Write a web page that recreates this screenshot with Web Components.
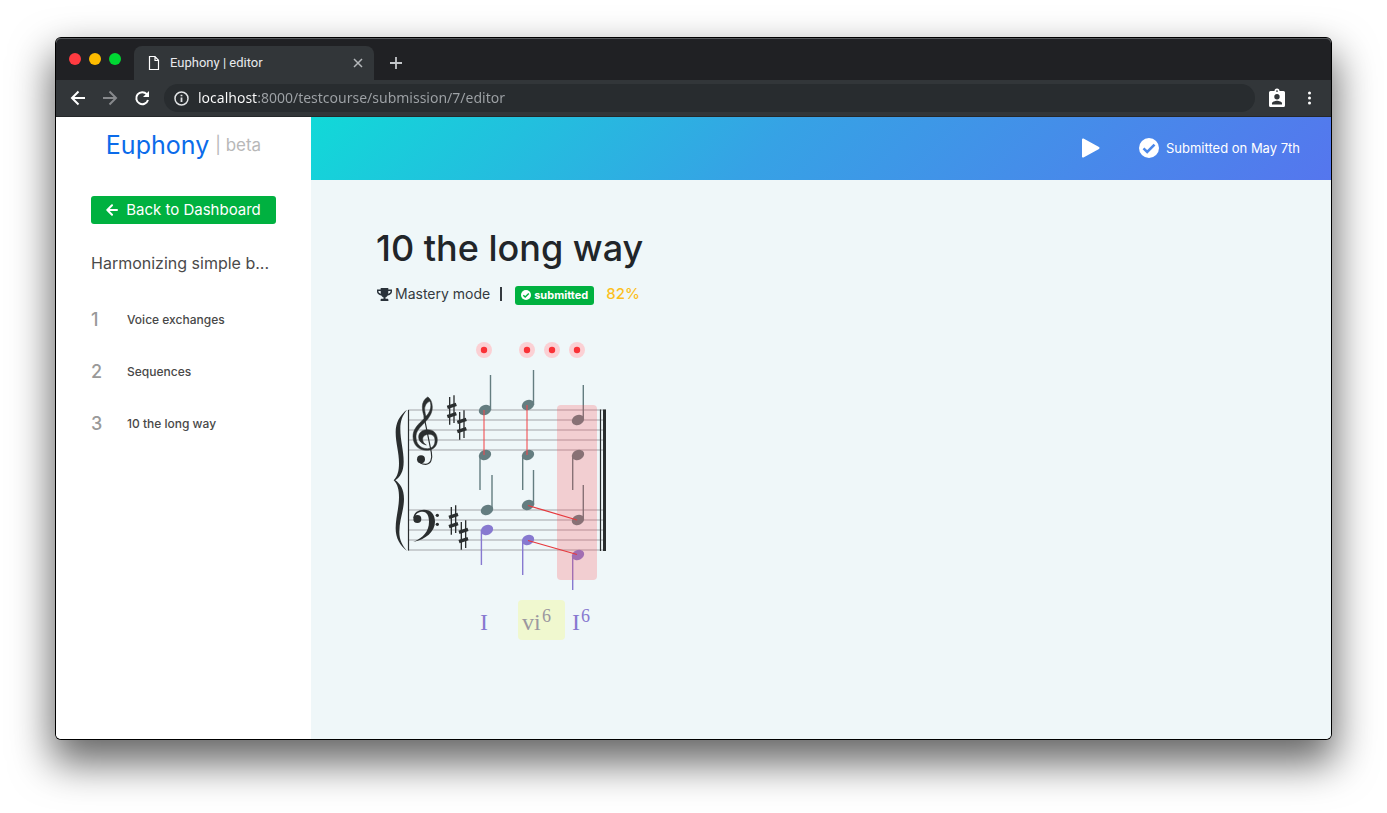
<!DOCTYPE html>
<html lang="en">
<head>
<meta charset="utf-8">
<title>Euphony | editor</title>
<style>
  body { margin: 0; background: #fff; font-family: Inter, "Open Sans", sans-serif; }
</style>
</head>
<body>
<browser-window>
  <tab-strip slot="chrome" label="Euphony | editor"></tab-strip>
  <nav-toolbar slot="chrome" url="localhost:8000/testcourse/submission/7/editor"></nav-toolbar>
  <course-sidebar>
    <span slot="heading">Harmonizing simple b...</span>
    <exercise-link number="1">Voice exchanges</exercise-link>
    <exercise-link number="2">Sequences</exercise-link>
    <exercise-link number="3">10 the long way</exercise-link>
  </course-sidebar>
  <editor-pane>
    <editor-header slot="header">Submitted on May 7th</editor-header>
    <exercise-heading score="82%">10 the long way</exercise-heading>
    <music-score></music-score>
  </editor-pane>
</browser-window>

<script>
class Base extends HTMLElement {
  constructor() {
    super();
    this.attachShadow({ mode: "open" });
  }
  connectedCallback() {
    this.shadowRoot.innerHTML = "<style>*{box-sizing:border-box}svg{display:block;flex:none}button,input{font:inherit;border:0;padding:0;margin:0;background:none;color:inherit}</style>" + this.view();
  }
}

customElements.define("browser-window", class extends Base {
  view() {
    return `<style>
      :host { display: flex; box-sizing: border-box; min-height: 100vh; padding: 38px 56px 74px; }
      .frame { flex: 1; min-width: 0; display: flex; flex-direction: column; border-radius: 5px;
        background: #fff; box-shadow: 0 0 0 1px #000, 0 20px 40px 4px rgba(0,0,0,.6); }
      .chrome { border-radius: 5px 5px 0 0; overflow: hidden; background: #202124; box-shadow: inset 0 1px #55585b; }
      .page { flex: 1; display: flex; border-radius: 0 0 5px 5px; overflow: hidden; }
    </style>
    <div class="frame"><div class="chrome"><slot name="chrome"></slot></div><div class="page"><slot></slot></div></div>`;
  }
});

customElements.define("tab-strip", class extends Base {
  view() {
    return `<style>
      :host { display: flex; height: 42px; align-items: flex-end; padding-left: 13px; color: #e8eaed; }
      .lights { display: flex; gap: 8px; align-self: center; margin-right: 13px; }
      .lights button { width: 12px; height: 12px; border-radius: 50%; }
      .tab { display: flex; align-items: center; width: 240px; height: 34px; padding: 0 10px 0 14px;
        background: #323639; border-radius: 8px 8px 0 0; font: 13px/16px Roboto, sans-serif; }
      .tab span { flex: 1; margin-left: 10px; }
      .new { align-self: center; margin: 8px 0 0 15px; }
    </style>
    <div class="lights">
      <button aria-label="Close window" style="background:#ff3b41"></button>
      <button aria-label="Minimize" style="background:#fdbc00"></button>
      <button aria-label="Zoom" style="background:#00d733"></button>
    </div>
    <div class="tab" role="tab">
      <svg width="12" height="16" viewBox="0 0 12 16" fill="none" stroke="#fff" stroke-width="1.2"><path d="M1.500 1.500h5.500l3.500 3.800v9.200h-9zM7 1.700v3.800h3.500"/></svg>
      <span>${this.getAttribute("label")}</span>
      <button aria-label="Close tab"><svg width="12" height="12" viewBox="0 0 12 12" stroke="#b4b7ba" stroke-width="1.500"><path d="M2 2l8 8M10 2l-8 8"/></svg></button>
    </div>
    <button class="new" aria-label="New tab"><svg width="14" height="14" viewBox="0 0 14 14" stroke="#c4c7ca" stroke-width="1.800"><path d="M7 1v12M1 7h12"/></svg></button>`;
  }
});

customElements.define("nav-toolbar", class extends Base {
  view() {
    return `<style>
      :host { display: flex; align-items: center; height: 37px; padding: 0 15px 0 14px; box-sizing: border-box;
        background: #323639; border-bottom: 1px solid #25282a; }
      .nav { display: flex; gap: 16px; margin-right: 14px; }
      label { flex: 1; display: flex; align-items: center; gap: 9px; height: 28px; padding-left: 10px; border-radius: 14px; background: #282c2f; }
      input { flex: 1; min-width: 0; height: 20px; outline: 0; font: 14px/20px "Noto Sans", sans-serif;
        background: linear-gradient(90deg, #fff 60px, #9fa3a7 60px); background-clip: text; -webkit-background-clip: text; -webkit-text-fill-color: transparent; }
      .tools { display: flex; align-items: center; gap: 18px; margin-left: 14px; }
    </style>
    <div class="nav">
      <button aria-label="Back"><svg width="16" height="16" viewBox="0 0 16 16" fill="none" stroke="#fff" stroke-width="2"><path d="M15 8H2.500M8.500 1.500L2 8l6.500 6.500"/></svg></button>
      <button aria-label="Forward"><svg width="16" height="16" viewBox="0 0 16 16" fill="none" stroke="#87898c" stroke-width="2"><path d="M1 8h12.500M7.500 1.500L14 8l-6.500 6.500"/></svg></button>
      <button aria-label="Reload"><svg width="16" height="16" viewBox="0 0 16 16"><path d="M12.800 4.200A6 6 0 1 0 14 10" fill="none" stroke="#fff" stroke-width="2"/><path d="M15 1v6H9z" fill="#fff"/></svg></button>
    </div>
    <label aria-label="Address">
      <svg width="15" height="15" viewBox="0 0 15 15" fill="none" stroke="#e0e2e4"><circle cx="7.500" cy="7.500" r="6.500" stroke-width="1.500"/><path d="M7.500 6.600v4.500M7.500 3.700v1.600" stroke-width="1.800"/></svg>
      <input value="${this.getAttribute("url")}" spellcheck="false">
    </label>
    <div class="tools">
      <button aria-label="Profile"><svg width="16" height="20" viewBox="0 0 16 20"><path d="M1.500 3h4A2.500 2.500 0 0 1 10.500 3h4Q16 3 16 4.500v13q0 1.500-1.500 1.500h-13Q0 19 0 17.500v-13Q0 3 1.500 3z" fill="#fff"/><circle cx="8" cy="3.100" r=".9" fill="#323639"/><circle cx="8" cy="8.800" r="2.700" fill="#323639"/><path d="M3 16.500v-1c0-1.800 3-2.700 5-2.700s5 .9 5 2.700v1z" fill="#323639"/></svg></button>
      <button aria-label="Menu"><svg width="13" height="16" viewBox="0 0 13 16" fill="#fff"><circle cx="6.500" cy="3" r="1.500"/><circle cx="6.500" cy="8" r="1.500"/><circle cx="6.500" cy="13" r="1.500"/></svg></button>
    </div>`;
  }
});

customElements.define("course-sidebar", class extends Base {
  view() {
    return `<style>
      :host { display: block; flex: none; width: 255px; box-sizing: border-box; padding: 0 35px; background: #fff; }
      .brand { display: flex; justify-content: center; align-items: center; gap: 6px; height: 56px; text-decoration: none;
        color: #0b6bea; font-size: 25px; line-height: 32px; }
      .brand small { color: #b8b8b8; font-size: 17px; }
      .back { display: flex; align-items: center; justify-content: center; gap: 8px; width: 185px; height: 28px; margin-top: 23px;
        border-radius: 3px; background: #00b140; color: #fff; font-size: 15px; line-height: 20px; text-decoration: none; }
      h2 { margin: 27px 0 19px; color: #4a4a4a; font-size: 16px; font-weight: 400; line-height: 24px; white-space: nowrap; }
    </style>
    <a class="brand" href="#">Euphony <small>| beta</small></a>
    <a class="back" href="#"><svg width="12" height="12" viewBox="0 0 12 12" fill="none" stroke="#fff" stroke-width="2" stroke-linecap="round" stroke-linejoin="round"><path d="M11 6H1.500M6 1.300L1.300 6 6 10.700"/></svg>Back to Dashboard</a>
    <h2><slot name="heading"></slot></h2>
    <nav><slot></slot></nav>`;
  }
});

customElements.define("exercise-link", class extends Base {
  view() {
    return `<style>
      :host { display: block; }
      a { display: grid; grid-template-columns: 36px 1fr; align-items: center; height: 52px; color: #484848; font-size: 12px; font-weight: 500; line-height: 18px; text-decoration: none; }
      b { color: #999; font-size: 18px; font-weight: 500; }
    </style><a href="#"><b>${this.getAttribute("number")}</b><span><slot></slot></span></a>`;
  }
});

customElements.define("editor-pane", class extends Base {
  view() {
    return `<style>
      :host { display: flex; flex-direction: column; flex: 1; min-width: 0; background: #eff7f9; }
      main { padding: 43px 65px 0; }
    </style><slot name="header"></slot><main><slot></slot></main>`;
  }
});

customElements.define("editor-header", class extends Base {
  view() {
    return `<style>
      :host { display: flex; align-items: center; justify-content: flex-end; box-sizing: border-box; height: 63px; padding: 0 31px 2px 0;
        background: linear-gradient(135deg, #11d9d8, #36a2e5 45%, #5576ee); color: #fff; font-size: 13px; line-height: 20px; }
      .state { display: flex; align-items: center; gap: 7px; margin-left: 39px; }
    </style>
    <button aria-label="Play"><svg width="19" height="20" viewBox="0 0 19 20"><path d="M2 1.500L17.500 10 2 18.500z" fill="#fff" stroke="#fff" stroke-width="2" stroke-linejoin="round"/></svg></button>
    <div class="state"><svg width="20" height="20" viewBox="0 0 20 20"><circle cx="10" cy="10" r="10" fill="#fff"/><path d="M4.500 10.300l3.700 3.700 7.300-7.300" fill="none" stroke="#4c88ea" stroke-width="2.600"/></svg><span><slot></slot></span></div>`;
  }
});

customElements.define("exercise-heading", class extends Base {
  view() {
    return `<style>
      :host { display: block; color: #212529; }
      h1 { margin: 0; font-size: 36px; line-height: 50px; font-weight: 500; }
      .meta { display: flex; align-items: center; height: 24px; margin: 9px 0 0 1px; font-size: 14px; line-height: 20px; }
      .mode { display: flex; align-items: center; gap: 3px; color: #343a40; }
      .bar { width: 2px; height: 14px; margin: 0 13px 0 10px; background: #343a40; }
      .badge { display: flex; align-items: center; gap: 3px; height: 19px; margin-top: 2px; padding: 0 6px; border-radius: 3px; background: #00b140; color: #fff; font-size: 11px; font-weight: 700; }
      .score { margin-left: 12px; color: #fcc01e; font-size: 15px; font-weight: 500; }
    </style>
    <h1><slot></slot></h1>
    <div class="meta">
      <span class="mode"><svg width="15" height="13" viewBox="0 0 15 13"><path d="M3.700 0h7.600v1.600H15v1.800c0 2-1.600 3.400-4.300 4C10 8.500 9.200 9 8.500 9.300v1.500h1.700c.8 0 1.200.5 1.200 1.200v1H3.600v-1c0-.7.4-1.200 1.200-1.200h1.700V9.300C5.800 9 5 8.500 4.300 7.400 1.600 6.800 0 5.400 0 3.400V1.600h3.700zM1.400 3c0 1.300.8 2.200 2.500 2.800C3.700 5 3.700 4 3.700 3zM13.600 3h-2.300c0 1 0 2-.2 2.800 1.700-.6 2.500-1.500 2.500-2.800z" fill="#29323a" fill-rule="evenodd"/></svg>Mastery mode</span>
      <span class="bar"></span>
      <span class="badge"><svg width="10" height="10" viewBox="0 0 10 10"><circle cx="5" cy="5" r="5" fill="#fff"/><path d="M2.300 5.200l1.900 1.900 3.600-3.700" fill="none" stroke="#00b140" stroke-width="1.400"/></svg>submitted</span>
      <span class="score">${this.getAttribute("score")}</span>
    </div>`;
  }
});

customElements.define("music-score", class extends Base {
  view() {
    const slate = "#647d80", violet = "#8779d0";
    const lines = [75, 85, 95, 105, 115, 175, 185, 195, 205, 215]
      .map(y => `<path d="M23 ${y}H221"/>`).join("");
    // [head x, head y, stem x, stem end y, colour]
    const notes = [
      [100, 75, 105.5, 40, slate], [143, 70, 148.5, 35, slate], [193, 85, 198.3, 50, slate],
      [100, 120, 95, 155, slate], [143, 120, 137.7, 155, slate], [193, 120, 187.7, 155, slate],
      [102, 175, 107, 140, slate], [143, 170, 148.5, 135, slate], [193, 185, 198.3, 150, slate],
      [102, 195, 96.4, 230, violet], [143, 205, 137.7, 240, violet], [193, 220, 187.7, 255, violet]
    ].map(([x, y, sx, sy, c]) => `<ellipse cx="${x}" cy="${y}" rx="6.400" ry="5" transform="rotate(-25 ${x} ${y})" fill="${c}"/><path d="M${sx} ${y}V${sy}" stroke="${c}" stroke-width="1.400"/>`).join("");
    const dots = [99, 142, 167, 192]
      .map(x => `<circle cx="${x}" cy="15" r="8" fill="#fbd0d4"/><circle cx="${x}" cy="15" r="3.200" fill="#f93237"/>`).join("");
    // Engraved symbols are drawn on a grid three times finer than the staff.
    const sharps = [[200, 225], [230, 270], [205, 555], [235, 600]]
      .map(([x, y]) => `<g transform="translate(${x} ${y})"><path d="M-6-39V44M7-44V39" stroke-width="4"/><path d="M-13-8L14-17M-13 20L14 11" stroke-width="10"/></g>`).join("");
    return `<style>
      :host { display: block; margin: 29px 0 0 9px; }
      text { font-family: "Liberation Serif", serif; font-size: 24px; fill: #8779d0; }
      .sup { font-size: 18px; }
      .muted { fill: #9b979f; }
    </style>
    <svg width="240" height="310" viewBox="0 0 240 310" role="img" aria-label="Harmony exercise">
      <g stroke="#bcc1c3" stroke-width="1.700">${lines}</g>
      <g stroke="#2a2e2f"><path d="M23.500 75V215.500M215.500 74.500V216" stroke-width="1.200"/><path d="M219.500 74.500V216" stroke-width="3"/></g>
      <g transform="scale(.33333)" fill="#2a2e2f">
        <path d="M66 224C45 240 32 262 32 292C32 325 42 352 42 385C42 408 38 424 26 436C38 448 42 464 42 487C42 520 32 547 32 580C32 610 45 632 66 648C52 630 43 615 43 590C43 555 57 525 57 492C57 462 45 446 31 436C45 426 56 410 56 380C56 347 46 317 46 282C46 257 52 242 66 224z"/>
        <path fill-rule="evenodd" stroke="#2a2e2f" stroke-width="1.500" d="M128 186C136 190 142 202 142 217C142 238 128 254 114 268C100 282 93 291 93 306C93 328 108 341 127 341C143 341 150 331 150 316C150 304 143 298 132 298C120 298 113 305 113 313C113 320 117 326 124 330C109 327 101 317 101 306C101 292 112 284 128 284C146 284 157 296 157 314C157 334 145 346 124 346C101 346 84 330 84 304C84 286 95 272 110 258C114 254 117 251 119 249C114 236 112 225 112 215C112 203 118 192 128 186zM134 199C125 202 118 214 119 224C120 232 121 238 123 244C133 233 139 220 137 207C136 201 135 199 134 199z"/>
        <path d="M117 244L139 352C143 372 137 387 122 388C112 388 102 384 100 374" fill="none" stroke="#2a2e2f" stroke-width="3.500"/>
        <circle cx="108" cy="373" r="12"/>
        <circle cx="97" cy="552" r="12"/>
        <path d="M85 550C86 532 100 524 117 524C138 524 150 538 150 560C150 590 122 613 85 621C115 607 132 589 132 560C132 543 126 530 113 530C102 530 92 535 90 547z"/>
        <circle cx="157" cy="541" r="5"/><circle cx="157" cy="568" r="5"/>
        <g stroke="#2a2e2f">${sharps}</g>
      </g>
      ${notes}
      <path d="M99 75V120M142 70V120" stroke="#f4494d" stroke-opacity=".7" stroke-width="1.500"/>
      <rect x="172" y="70" width="40" height="175" rx="4" fill="#fb4b55" fill-opacity=".24"/>
      <path d="M143 170.500L192 185M143 205.500L192 219.500" stroke="#e6393d" stroke-width="1.300"/>
      ${dots}
      <rect x="133" y="265" width="47" height="40" rx="4" fill="#f0f8cf"/>
      <text x="95" y="295">I</text>
      <text class="muted" x="137" y="295">vi</text><text class="muted sup" x="157" y="287">6</text>
      <text x="187" y="295">I</text><text class="sup" x="196" y="287">6</text>
    </svg>`;
  }
});
</script>
</body>
</html>
